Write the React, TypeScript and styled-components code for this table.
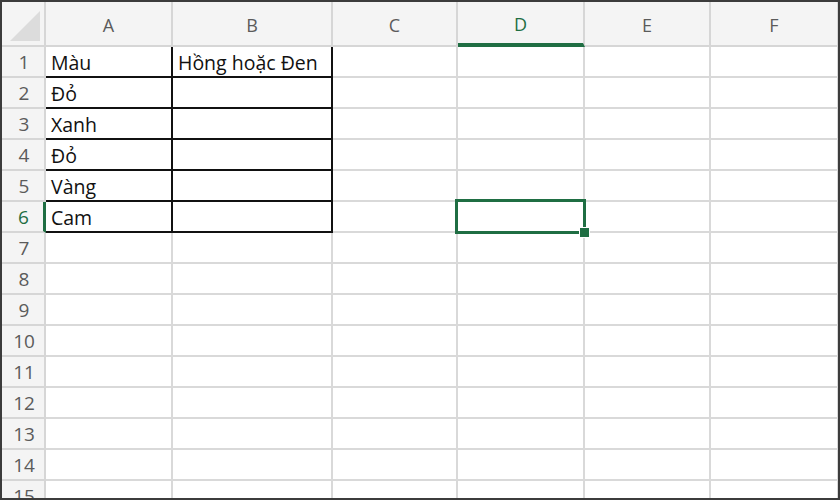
import styled, { createGlobalStyle } from "styled-components";

const GlobalStyle = createGlobalStyle`
  html, body {
    margin: 0;
    padding: 0;
    background: #ffffff;
  }
`;

const COLUMNS = ["A", "B", "C", "D", "E", "F"];
const COL_WIDTHS = [127, 160, 125, 127, 126, 128];
const ROW_COUNT = 15;

const DATA: Record<string, string> = {
  A1: "Màu",
  B1: "Hồng hoặc Đen",
  A2: "Đỏ",
  A3: "Xanh",
  A4: "Đỏ",
  A5: "Vàng",
  A6: "Cam",
};

const ACTIVE_COL = "D";
const ACTIVE_ROW = 6;

const isBordered = (col: string, row: number) =>
  (col === "A" || col === "B") && row >= 1 && row <= 6;

const App = () => {
  return (
    <>
      <GlobalStyle />
      <Frame>
        <Sheet>
          <Corner>
            <CornerMark />
          </Corner>
          {COLUMNS.map((c) => (
            <ColHeader key={c} $active={c === ACTIVE_COL}>
              {c}
            </ColHeader>
          ))}
          {Array.from({ length: ROW_COUNT }, (_, i) => i + 1).map((r) => (
            <RowGroup key={r}>
              <RowHeader $active={r === ACTIVE_ROW}>{r}</RowHeader>
              {COLUMNS.map((c) => {
                const id = `${c}${r}`;
                const active = c === ACTIVE_COL && r === ACTIVE_ROW;
                return (
                  <Cell key={id} $bordered={isBordered(c, r)} $active={active}>
                    {DATA[id]}
                    {active && (
                      <Selection>
                        <FillHandle />
                      </Selection>
                    )}
                  </Cell>
                );
              })}
            </RowGroup>
          ))}
        </Sheet>
      </Frame>
    </>
  );
};
export default App;

const Frame = styled.div`
  width: 840px;
  height: 500px;
  box-sizing: border-box;
  border: 2px solid #3c3c3c;
  overflow: hidden;
  background: #ffffff;
`;

const Sheet = styled.div`
  display: grid;
  grid-template-columns: 44px ${COL_WIDTHS.map((w) => `${w}px`).join(" ")};
  grid-template-rows: 45px repeat(${ROW_COUNT}, 31px);
  font-family: "Open Sans", "Liberation Sans", sans-serif;
`;

const RowGroup = styled.div`
  display: contents;
`;

const HeaderBase = styled.div`
  box-sizing: border-box;
  background: #f4f4f4;
  border-right: 2px solid #d6d6d6;
  border-bottom: 2px solid #d6d6d6;
  display: flex;
  align-items: center;
  color: #5b5b5b;
`;

const Corner = styled(HeaderBase)`
  position: relative;
`;

const CornerMark = styled.div`
  position: absolute;
  right: 4px;
  bottom: 4px;
  width: 0;
  height: 0;
  border-left: 30px solid transparent;
  border-bottom: 30px solid #dcdcdc;
`;

const ColHeader = styled(HeaderBase)<{ $active?: boolean }>`
  justify-content: center;
  font-size: 18px;
  padding-top: 2px;
  color: ${(p) => (p.$active ? "#1f6e43" : "#5b5b5b")};
  border-bottom: ${(p) =>
    p.$active ? "4px solid #1f6e43" : "2px solid #d6d6d6"};
`;

const RowHeader = styled(HeaderBase)<{ $active?: boolean }>`
  justify-content: center;
  font-size: 19px;
  padding-left: 2px;
  color: ${(p) => (p.$active ? "#1f6e43" : "#5b5b5b")};
  border-right: ${(p) =>
    p.$active ? "3px solid #1f6e43" : "2px solid #d6d6d6"};
`;

const Cell = styled.div<{ $bordered?: boolean; $active?: boolean }>`
  position: relative;
  z-index: ${(p) => (p.$active ? 2 : "auto")};
  box-sizing: border-box;
  border-right: 2px solid ${(p) => (p.$bordered ? "#111111" : "#d9d9d9")};
  border-bottom: 2px solid ${(p) => (p.$bordered ? "#111111" : "#d9d9d9")};
  display: flex;
  align-items: center;
  padding-left: 5px;
  padding-top: 2px;
  font-size: 19.5px;
  color: #111111;
  white-space: nowrap;
`;

const Selection = styled.div`
  position: absolute;
  left: -3px;
  top: -3px;
  right: -3px;
  bottom: -3px;
  border: 3px solid #1f6e43;
  pointer-events: none;
`;

const FillHandle = styled.div`
  position: absolute;
  right: -7px;
  bottom: -7px;
  width: 9px;
  height: 9px;
  background: #1f6e43;
  border: 1px solid #ffffff;
`;
